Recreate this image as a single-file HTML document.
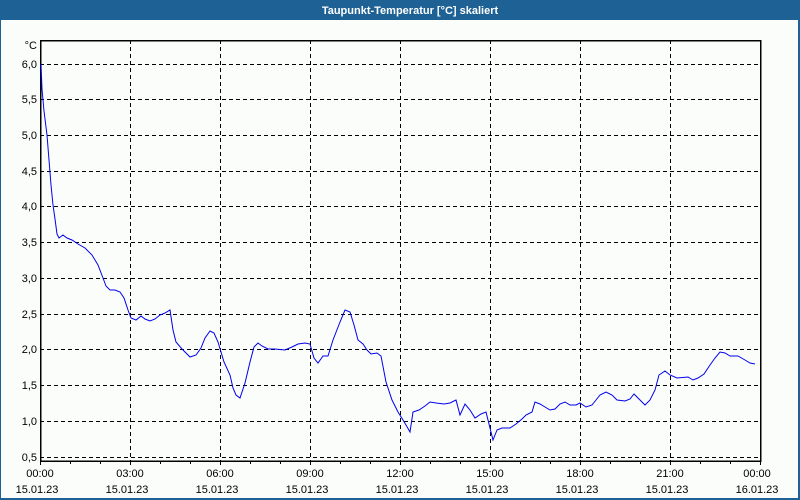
<!DOCTYPE html>
<html><head><meta charset="utf-8"><style>
html,body{margin:0;padding:0;background:#fbfdfb}
svg{display:block}
text{font-family:"Liberation Sans","DejaVu Sans",sans-serif;font-size:11px;fill:#000}
</style></head><body>
<svg width="800" height="500" viewBox="0 0 800 500">
<rect x="0" y="0" width="800" height="500" fill="#1d6195"/>
<rect x="1" y="20" width="797" height="478" fill="#fbfdfb"/>
<text x="410" y="14" text-anchor="middle" style="font-weight:bold;fill:#fff">Taupunkt-Temperatur [°C] skaliert</text>
<g stroke="#000" stroke-width="1" stroke-dasharray="4,3" fill="none" shape-rendering="crispEdges">
<path d="M40 64.5H760M40 99.5H760M40 135.5H760M40 171.5H760M40 206.5H760M40 242.5H760M40 278.5H760M40 314.5H760M40 349.5H760M40 385.5H760M40 421.5H760M40 457.5H760"/>
<path d="M130.5 40V461M220.5 40V461M310.5 40V461M400.5 40V461M490.5 40V461M580.5 40V461M670.5 40V461"/>
</g>
<g stroke="#000" fill="none" shape-rendering="crispEdges">
<rect x="40.5" y="40.5" width="720" height="420.5" stroke-width="1.5"/>
<path d="M40.5 461V465M70.5 461V464M100.5 461V464M130.5 461V465M160.5 461V464M190.5 461V464M220.5 461V465M250.5 461V464M280.5 461V464M310.5 461V465M340.5 461V464M370.5 461V464M400.5 461V465M430.5 461V464M460.5 461V464M490.5 461V465M520.5 461V464M550.5 461V464M580.5 461V465M610.5 461V464M640.5 461V464M670.5 461V465M700.5 461V464M730.5 461V464M760.5 461V465"/>
</g>
<polyline fill="none" stroke="#0000ee" stroke-width="1" points="41,64 42,89 44,111 47,135 49,160 51,185 53,205 55,219 57,234 59,238 63,235 67,238 72,240 78,244 85,248 92,255 98,265 103,278 106,286 110,290 115,290 120,292 124,298 128,310 131,318 136,320 141,316 145,319 150,321 155,319 160,315 165,313 170,310 173,330 176,342 182,349 190,357 196,355 201,348 205,338 210,331 214,333 218,342 224,362 230,375 233,388 236,395 240,398 245,383 250,362 254,347 258,343 262,346 268,349 275,349 285,350 292,347 298,344 305,343 310,344 314,358 318,363 323,356 328,356 333,340 340,322 345,310 350,312 354,325 358,340 363,344 367,350 371,354 377,353 381,356 386,382 392,400 398,412 403,420 406,425 410,432 413,412 419,410 425,406 430,402 436,403 444,404 450,403 456,400 460,415 465,404 470,410 475,418 481,414 486,412 490,428 493,440 497,430 502,428 510,428 516,424 522,419 526,415 532,412 535,402 540,404 545,407 550,410 555,409 560,404 565,402 570,405 576,405 580,403 586,407 592,405 596,400 600,395 606,392 612,395 617,400 625,401 630,399 634,394 640,400 645,405 650,400 655,390 659,375 665,371 670,375 677,378 688,377 693,380 698,378 704,374 710,365 715,358 720,352 725,353 730,356 738,356 745,360 750,363 755,364"/>
<g text-anchor="end">
<text x="37" y="49">°C</text>
<text x="37" y="68">6,0</text><text x="37" y="103">5,5</text><text x="37" y="139">5,0</text><text x="37" y="175">4,5</text><text x="37" y="210">4,0</text><text x="37" y="246">3,5</text><text x="37" y="282">3,0</text><text x="37" y="318">2,5</text><text x="37" y="353">2,0</text><text x="37" y="389">1,5</text><text x="37" y="425">1,0</text><text x="37" y="461">0,5</text>
</g>
<g text-anchor="middle">
<text x="40" y="477">00:00</text><text x="130" y="477">03:00</text><text x="220" y="477">06:00</text><text x="310" y="477">09:00</text><text x="400" y="477">12:00</text><text x="490" y="477">15:00</text><text x="580" y="477">18:00</text><text x="670" y="477">21:00</text><text x="757" y="477">00:00</text>
<text x="37" y="493">15.01.23</text><text x="127" y="493">15.01.23</text><text x="217" y="493">15.01.23</text><text x="307" y="493">15.01.23</text><text x="397" y="493">15.01.23</text><text x="487" y="493">15.01.23</text><text x="577" y="493">15.01.23</text><text x="667" y="493">15.01.23</text><text x="757" y="493">16.01.23</text>
</g>
</svg>
</body></html>
